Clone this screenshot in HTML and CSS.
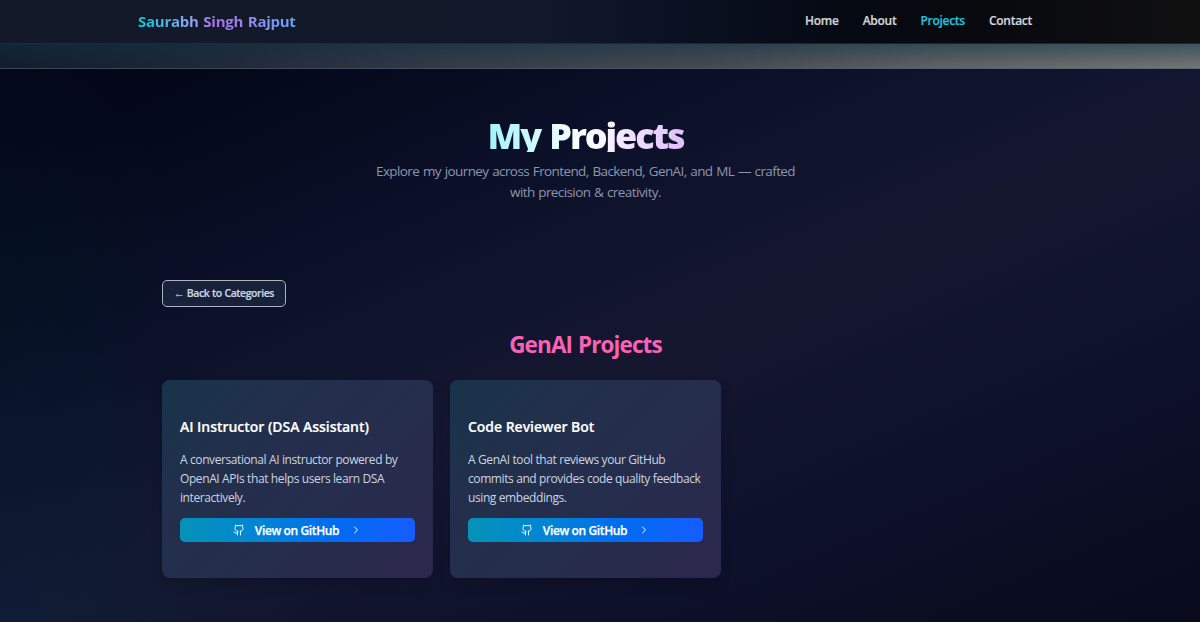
FILE: index.html
```html
<!DOCTYPE html>
<html lang="en">
<head>
    <meta charset="UTF-8">
    <meta name="viewport" content="width=device-width, initial-scale=1.0">
    <title>My Projects</title>
    <link rel="stylesheet" href="styles.css">
</head>
<body>
    <!-- Navbar -->
    <header class="navbar">
        <div class="nav-inner">
            <a class="logo">Saurabh Singh Rajput</a>
            <nav class="nav-links">
                <a>Home</a>
                <a>About</a>
                <a class="active">Projects</a>
                <a>Contact</a>
            </nav>
        </div>
    </header>
    <div class="glow-bar"></div>

    <main class="page">
        <!-- Heading -->
        <section class="intro">
            <h1>My Projects</h1>
            <p>Explore my journey across Frontend, Backend, GenAI, and ML — crafted<br>with precision &amp; creativity.</p>
        </section>

        <button class="back-button"><span class="back-arrow">←</span> Back to Categories</button>
        <h2>GenAI Projects</h2>

        <!-- Project cards -->
        <div class="cards">
            <article class="card">
                <h3>AI Instructor (DSA Assistant)</h3>
                <p>A conversational AI instructor powered by<br>OpenAI APIs that helps users learn DSA<br>interactively.</p>
                <a class="github-button">
                    <svg class="icon-github" viewBox="0 0 24 24"><path d="M15 22v-4a4.8 4.8 0 0 0-1-3.5c3 0 6-2 6-5.5.08-1.25-.27-2.48-1-3.5.28-1.15.28-2.35 0-3.5 0 0-1 0-3 1.5-2.64-.5-5.36-.5-8 0C6 2 5 2 5 2c-.3 1.15-.3 2.35 0 3.5A5.4 5.4 0 0 0 4 9c0 3.5 3 5.5 6 5.5-.39.49-.68 1.05-.85 1.65S8.93 17.38 9 18v4"/><path d="M9 18c-4.51 2-5-2-7-2"/></svg>
                    <span>View on GitHub</span>
                    <svg class="icon-chevron" viewBox="0 0 24 24"><path d="m9 18 6-6-6-6"/></svg>
                </a>
            </article>
            <article class="card">
                <h3>Code Reviewer Bot</h3>
                <p>A GenAI tool that reviews your GitHub<br>commits and provides code quality feedback<br>using embeddings.</p>
                <a class="github-button">
                    <svg class="icon-github" viewBox="0 0 24 24"><path d="M15 22v-4a4.8 4.8 0 0 0-1-3.5c3 0 6-2 6-5.5.08-1.25-.27-2.48-1-3.5.28-1.15.28-2.35 0-3.5 0 0-1 0-3 1.5-2.64-.5-5.36-.5-8 0C6 2 5 2 5 2c-.3 1.15-.3 2.35 0 3.5A5.4 5.4 0 0 0 4 9c0 3.5 3 5.5 6 5.5-.39.49-.68 1.05-.85 1.65S8.93 17.38 9 18v4"/><path d="M9 18c-4.51 2-5-2-7-2"/></svg>
                    <span>View on GitHub</span>
                    <svg class="icon-chevron" viewBox="0 0 24 24"><path d="m9 18 6-6-6-6"/></svg>
                </a>
            </article>
        </div>
    </main>
</body>
</html>
```
FILE: styles.css
```css
* {
    box-sizing: border-box;
}

body {
    margin: 0;
    height: 622px;
    overflow: hidden;
    font-family: "Segoe UI", "Open Sans", "Noto Sans", sans-serif;
    color: #fff;
    background:
        radial-gradient(ellipse 320px 300px at 0 100%, rgba(13, 30, 56, 0.7), rgba(13, 30, 56, 0)),
        radial-gradient(ellipse 200px 300px at 0 55%, rgba(3, 20, 36, 0.7), rgba(3, 20, 36, 0)),
        linear-gradient(157deg, #030719 14%, #0c112a 36%, #15172f 56%, #0e112b 75%, #080a1c 100%);
}

/* Navbar */
.navbar {
    height: 44px;
    padding-right: 30px;
    border-bottom: 1px solid rgba(22, 78, 99, 0.45);
    background: linear-gradient(to right, #131928, #101829 45%, #0b1021 58%, #050912 70%, #090a0e 84%, #101011);
}

.nav-inner {
    display: flex;
    justify-content: space-between;
    align-items: center;
    width: 894px;
    height: 42px;
    margin: 0 auto;
}

.logo {
    font-size: 15px;
    font-weight: 700;
    letter-spacing: -0.25px;
    word-spacing: 1px;
    background: linear-gradient(to right, #06c8d8, #8fa5f2 33%, #a970ee 50%, #918cf2 75%, #60a5fa);
    -webkit-background-clip: text;
    background-clip: text;
    color: transparent;
}

.nav-links {
    display: flex;
    gap: 24px;
    font-size: 12px;
    font-weight: 600;
    letter-spacing: -0.27px;
    line-height: 16px;
    color: #d1d5db;
    -webkit-text-stroke: 0.2px;
}

.nav-links .active {
    color: #22c3dc;
}

.glow-bar {
    height: 25px;
    border-bottom: 1px solid rgba(148, 163, 184, 0.25);
    background:
        linear-gradient(to bottom, rgba(8, 50, 72, 0.5), rgba(8, 50, 72, 0)),
        linear-gradient(to right, #151b2a, #242936 20%, #383b46 38%, #4a4b50 60%, #626262 78%, #757574);
}

/* Page content */
.page {
    width: 847px;
    margin-left: 162px;
}

.intro {
    height: 211px;
    padding-top: 48px;
    text-align: center;
}

h1 {
    width: 240px;
    height: 35px;
    margin: 0 auto;
    font-size: 36px;
    font-weight: 800;
    line-height: 38px;
    letter-spacing: -2.1px;
    word-spacing: 2px;
    background: linear-gradient(to right, #a5f3fc 10%, #fff 50%, #e0c0ff 90%);
    -webkit-background-clip: text;
    background-clip: text;
    color: transparent;
}

.intro p {
    margin: 9px 0 0;
    font-size: 13.5px;
    line-height: 21px;
    letter-spacing: -0.6px;
    word-spacing: 0.8px;
    color: #8b97ad;
}

.back-button {
    display: block;
    width: 124px;
    height: 27px;
    padding: 0 0 1px;
    border: 1px solid #aab4c5;
    border-radius: 5px;
    background: #17213a;
    color: #cbd5e1;
    font-family: inherit;
    font-size: 10.5px;
    font-weight: 600;
    letter-spacing: -0.42px;
    word-spacing: 0.4px;
    white-space: nowrap;
    -webkit-text-stroke: 0.2px;
}

.back-arrow {
    font-family: "Liberation Sans", sans-serif;
    font-weight: 400;
}

h2 {
    margin: 22px 0 19px;
    font-size: 22.5px;
    font-weight: 700;
    line-height: 32px;
    letter-spacing: -0.9px;
    word-spacing: 1px;
    text-align: center;
    color: #f763b4;
}

.cards {
    display: flex;
    gap: 17px;
}

.card {
    width: 271px;
    height: 198px;
    padding: 36px 18px;
    border-radius: 8px;
    background: linear-gradient(135deg, #16344a, #21304b 25%, #262d4d 60%, #2b274c);
    box-shadow: 0 6px 12px rgba(0, 0, 0, 0.15);
}

.card h3 {
    margin: 0;
    font-size: 14px;
    font-weight: 600;
    line-height: 21px;
    letter-spacing: -0.03px;
    -webkit-text-stroke: 0.2px;
}

.card p {
    margin: 13px 0 11px;
    font-size: 12px;
    line-height: 19px;
    letter-spacing: -0.41px;
    word-spacing: 0.1px;
    color: #cbd5e1;
    white-space: nowrap;
}

.github-button {
    display: flex;
    justify-content: center;
    align-items: center;
    height: 24px;
    border-radius: 5px;
    background: linear-gradient(to right, #0593b7, #0084d5 35%, #006cf1 65%, #155dfc);
    font-size: 12px;
    font-weight: 600;
    letter-spacing: -0.38px;
}

.github-button span {
    -webkit-text-stroke: 0.25px;
}

.github-button svg {
    fill: none;
    stroke: currentColor;
    stroke-width: 2;
    stroke-linecap: round;
    stroke-linejoin: round;
}

.icon-github {
    width: 12px;
    height: 12px;
    margin-right: 10px;
}

.icon-chevron {
    width: 12px;
    height: 12px;
    margin-left: 11px;
}
```
